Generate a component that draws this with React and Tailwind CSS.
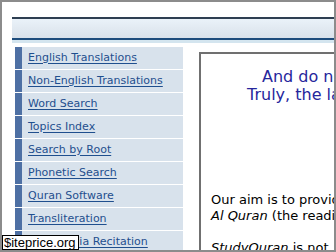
import React from 'react';

const links = [
  'English Translations',
  'Non-English Translations',
  'Word Search',
  'Topics Index',
  'Search by Root',
  'Phonetic Search',
  'Quran Software',
  'Transliteration',
  'Multimedia Recitation',
];

const App = () => {
  return (
    <div className="relative w-[336px] h-[252px] overflow-hidden bg-white border-2 border-[#8c8c8c] font-['DejaVu_Sans',Verdana,sans-serif]">
      {/* header bars */}
      <div className="pl-[10px] pt-[15px]">
        <div className="h-[2px] bg-[#2e3f52]" />
        <div className="h-[19px] bg-gradient-to-b from-[#eaf2f9] to-[#d9e1ea]" />
        <div className="h-[2px] bg-[#1d4c7c]" />
        <div className="h-[3px] bg-[#d4e5ef]" />
      </div>

      <div className="flex items-start">
        {/* left menu */}
        <div className="ml-[13px] mt-[4px] w-[168px] flex flex-col gap-px shrink-0">
          {links.map((l) => (
            <div key={l} className="flex h-[22px]">
              <div className="w-[7px] bg-[#4e70a4]" />
              <div className="flex-1 bg-[#d8e2ec] pl-[6px] flex items-center">
                <a href="#" className="text-[11px] text-[#1f4f8e] underline underline-offset-2 whitespace-nowrap">
                  {l}
                </a>
              </div>
            </div>
          ))}
        </div>

        {/* main content box */}
        <div className="ml-[16px] mt-[9px] w-[400px] h-[260px] shrink-0 border-2 border-[#707070] bg-white">
          <div className="pt-[14px] text-[16px] leading-[18px] text-[#26269c] whitespace-nowrap">
            <p className="pl-[61px]">And do not take the Quran lightly</p>
            <p className="pl-[46px]">Truly, the last word is with Allah</p>
          </div>
          <div className="pl-[10px] pt-[88px] text-[13px] leading-[16px] text-black whitespace-nowrap">
            <p>Our aim is to provide a free resource on</p>
            <p><i>Al Quran</i> (the reading) for all.</p>
            <p className="mt-[16px]"><i>StudyQuran</i> is not</p>
          </div>
        </div>
      </div>

      {/* watermark */}
      <div className="absolute left-0 bottom-0 bg-white border border-black pl-px pr-[2px] font-['Liberation_Sans',Arial,sans-serif] text-[13px] leading-[13px] text-black">
        $iteprice.org
      </div>
    </div>
  );
};

export default App;
